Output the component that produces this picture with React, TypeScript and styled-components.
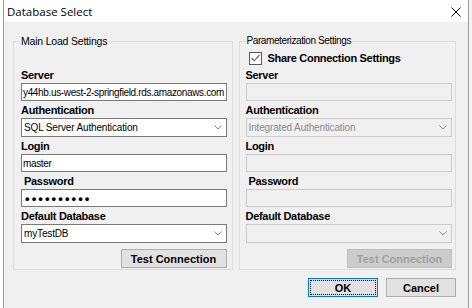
import styled, { createGlobalStyle } from "styled-components";

const GlobalStyle = createGlobalStyle`
  html, body {
    margin: 0;
    padding: 0;
    background: #ffffff;
  }
  body {
    font-family: "Liberation Sans", Arial, sans-serif;
    font-size: 11px;
    color: #000000;
  }
`;

const Page = styled.div`
  width: 472px;
  height: 308px;
  overflow: hidden;
  display: flex;
  background: #f3f3f3;
`;

const LeftStrip = styled.div`
  width: 3px;
  background: #ffffff;
`;

const Window = styled.div`
  width: 466px;
  height: 320px;
  box-sizing: border-box;
  border-left: 1px solid #9a9a9a;
  border-right: 1px solid #9a9a9a;
  display: flex;
  flex-direction: column;
  background: #f0f0f0;
`;

const TitleBar = styled.div`
  height: 22px;
  display: flex;
  align-items: center;
  justify-content: space-between;
  padding: 0 7px 0 3px;
  background: #ffffff;
  font-family: "Open Sans", "Liberation Sans", sans-serif;
  font-size: 11.5px;
  color: #000000;
`;

const CloseIcon = styled.svg`
  width: 10px;
  height: 10px;
  margin-top: 1px;
`;

const Body = styled.div`
  padding: 19px 12px 0 9px;
  display: flex;
  flex-direction: column;
`;

const Columns = styled.div`
  display: flex;
  gap: 6px;
`;

const GroupBox = styled.div<{ $w: number; $pt: number; $pl: number; $pr: number }>`
  position: relative;
  width: ${(p) => p.$w}px;
  height: 229px;
  box-sizing: border-box;
  border: 1px solid #dcdcdc;
  padding: ${(p) => p.$pt}px ${(p) => p.$pr}px 0 ${(p) => p.$pl}px;
  display: flex;
  flex-direction: column;
`;

const Caption = styled.span<{ $size: number; $ls: number }>`
  position: absolute;
  top: -8px;
  left: 6px;
  padding: 0 1px;
  background: #f0f0f0;
  font-size: ${(p) => p.$size}px;
  letter-spacing: ${(p) => p.$ls}px;
  line-height: 14px;
  color: #000000;
`;

const Field = styled.div`
  display: flex;
  flex-direction: column;
  margin-bottom: 1px;
`;

const Label = styled.label<{ $indent?: number }>`
  height: 16px;
  line-height: 16px;
  font-weight: bold;
  font-size: 11px;
  letter-spacing: -0.3px;
  padding-left: ${(p) => p.$indent ?? 0}px;
`;

const TextBox = styled.div<{ $disabled?: boolean }>`
  height: 18px;
  box-sizing: border-box;
  border: 1px solid ${(p) => (p.$disabled ? "#cccccc" : "#7a7a7a")};
  background: ${(p) => (p.$disabled ? "#f0f0f0" : "#ffffff")};
  display: flex;
  align-items: center;
  padding: 0 1px;
  overflow: hidden;
  white-space: nowrap;
  font-size: 10px;
  letter-spacing: -0.35px;
`;

const Dots = styled.span`
  font-size: 13px;
  font-weight: bold;
  letter-spacing: 2.1px;
  padding-left: 2px;
`;

const Combo = styled.div<{ $disabled?: boolean }>`
  height: 19px;
  box-sizing: border-box;
  border: 1px solid ${(p) => (p.$disabled ? "#cccccc" : "#7a7a7a")};
  background: ${(p) => (p.$disabled ? "#f0f0f0" : "#ffffff")};
  color: ${(p) => (p.$disabled ? "#8a8a8a" : "#000000")};
  display: flex;
  align-items: center;
  justify-content: space-between;
  padding: 0 4px 0 2px;
  font-size: 10px;
  letter-spacing: -0.15px;
`;

const Chevron = styled.svg`
  width: 8px;
  height: 5px;
`;

const ButtonRow = styled.div<{ $mt: number }>`
  display: flex;
  justify-content: flex-end;
  gap: 8px;
  margin-top: ${(p) => p.$mt}px;
`;

const Button = styled.button<{ $w: number; $disabled?: boolean; $focused?: boolean }>`
  width: ${(p) => p.$w}px;
  height: 19px;
  box-sizing: border-box;
  padding: 0;
  border: 1px solid ${(p) => (p.$focused ? "#0078d7" : p.$disabled ? "#bfbfbf" : "#adadad")};
  background: ${(p) => (p.$disabled ? "#cccccc" : "#e1e1e1")};
  color: ${(p) => (p.$disabled ? "#a0a0a0" : "#000000")};
  font-family: "Liberation Sans", Arial, sans-serif;
  font-weight: bold;
  font-size: 11px;
  display: flex;
  align-items: center;
  justify-content: center;
  ${(p) => (p.$focused ? "outline: 1px dotted #000; outline-offset: -3px;" : "")}
`;

const CheckRow = styled.div`
  height: 18px;
  display: flex;
  align-items: center;
  gap: 6px;
  padding-left: 3px;
  font-weight: bold;
  font-size: 11px;
  letter-spacing: -0.3px;
`;

const CheckBox = styled.span`
  width: 13px;
  height: 13px;
  box-sizing: border-box;
  border: 1px solid #5a5a5a;
  background: #ffffff;
  display: flex;
  align-items: center;
  justify-content: center;
`;

function ChevronDown() {
  return (
    <Chevron viewBox="0 0 8 5">
      <path d="M0.5 0.5 L4 4 L7.5 0.5" fill="none" stroke="#8a8a8a" strokeWidth="1" />
    </Chevron>
  );
}

export default function App() {
  return (
    <>
      <GlobalStyle />
      <Page>
        <LeftStrip />
        <Window>
          <TitleBar>
            <span>Database Select</span>
            <CloseIcon viewBox="0 0 10 10">
              <path d="M0.5 0.5 L9.5 9.5 M9.5 0.5 L0.5 9.5" stroke="#000" strokeWidth="1" />
            </CloseIcon>
          </TitleBar>
          <Body>
            <Columns>
              <GroupBox $w={220} $pt={25} $pl={7} $pr={5}>
                <Caption $size={10.5} $ls={-0.2}>Main Load Settings</Caption>
                <Field>
                  <Label>Server</Label>
                  <TextBox>y44hb.us-west-2-springfield.rds.amazonaws.com</TextBox>
                </Field>
                <Field>
                  <Label>Authentication</Label>
                  <Combo>
                    <span>SQL Server Authentication</span>
                    <ChevronDown />
                  </Combo>
                </Field>
                <Field>
                  <Label>Login</Label>
                  <TextBox>master</TextBox>
                </Field>
                <Field>
                  <Label $indent={3}>Password</Label>
                  <TextBox>
                    <Dots>••••••••••</Dots>
                  </TextBox>
                </Field>
                <Field>
                  <Label>Default Database</Label>
                  <Combo>
                    <span>myTestDB</span>
                    <ChevronDown />
                  </Combo>
                </Field>
                <ButtonRow $mt={5}>
                  <Button $w={106}>Test Connection</Button>
                </ButtonRow>
              </GroupBox>
              <GroupBox $w={218} $pt={7} $pl={6} $pr={3}>
                <Caption $size={10} $ls={-0.4}>Parameterization Settings</Caption>
                <CheckRow>
                  <CheckBox>
                    <svg width="9" height="8" viewBox="0 0 9 8">
                      <path d="M0.5 4 L3.3 6.8 L8.5 0.8" fill="none" stroke="#5a5a5a" strokeWidth="1.1" />
                    </svg>
                  </CheckBox>
                  <span>Share Connection Settings</span>
                </CheckRow>
                <Field>
                  <Label>Server</Label>
                  <TextBox $disabled />
                </Field>
                <Field>
                  <Label>Authentication</Label>
                  <Combo $disabled>
                    <span>Integrated Authentication</span>
                    <ChevronDown />
                  </Combo>
                </Field>
                <Field>
                  <Label>Login</Label>
                  <TextBox $disabled />
                </Field>
                <Field>
                  <Label $indent={3}>Password</Label>
                  <TextBox $disabled />
                </Field>
                <Field>
                  <Label>Default Database</Label>
                  <Combo $disabled>
                    <span />
                    <ChevronDown />
                  </Combo>
                </Field>
                <ButtonRow $mt={5}>
                  <Button $w={105} $disabled disabled>
                    Test Connection
                  </Button>
                </ButtonRow>
              </GroupBox>
            </Columns>
            <ButtonRow $mt={8}>
              <Button $w={70} $focused>
                OK
              </Button>
              <Button $w={70}>Cancel</Button>
            </ButtonRow>
          </Body>
        </Window>
      </Page>
    </>
  );
}
